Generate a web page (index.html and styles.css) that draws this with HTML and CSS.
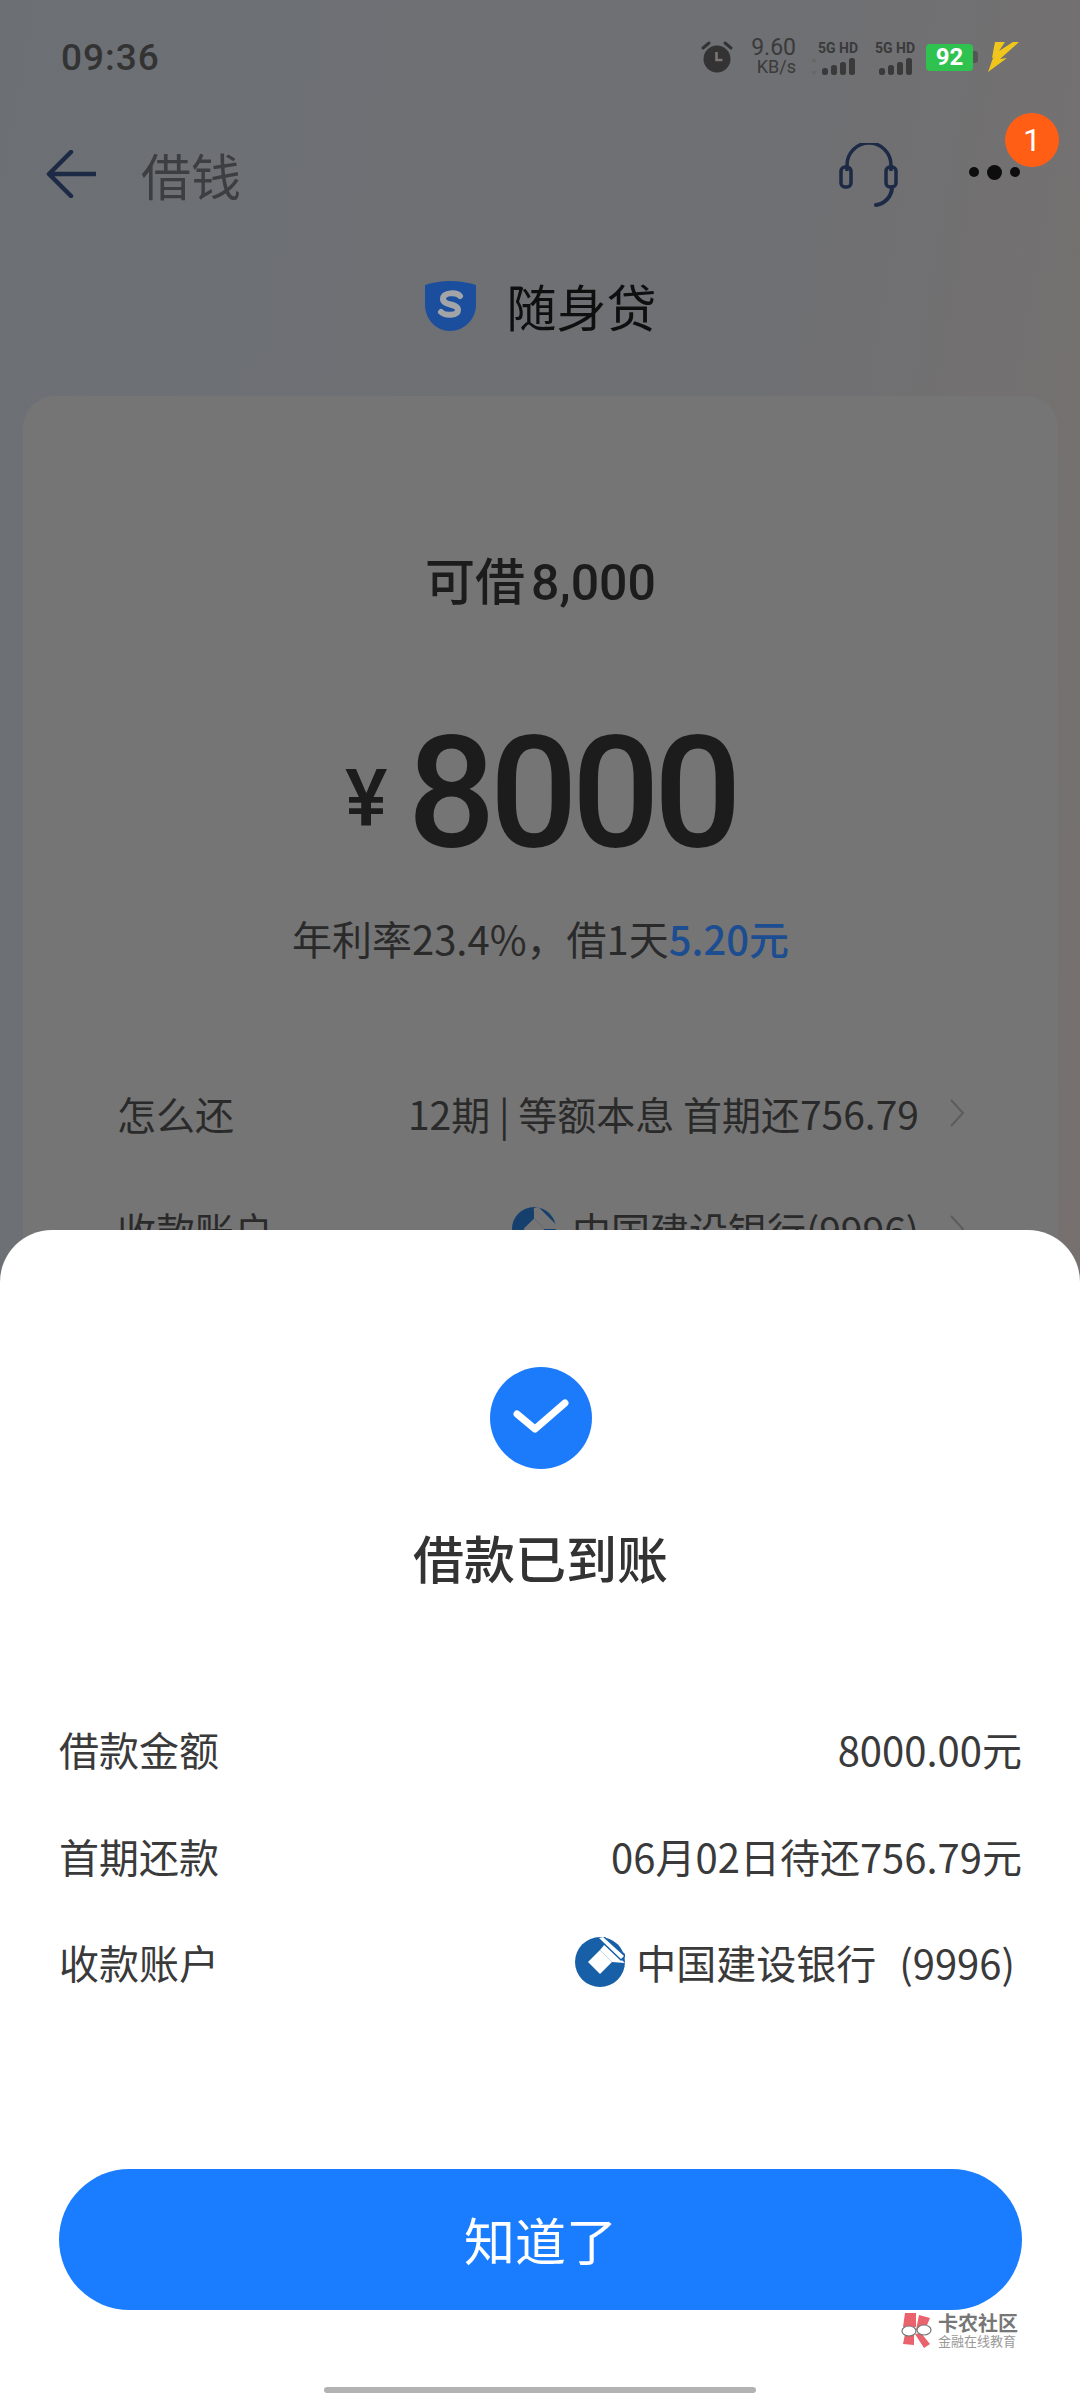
FILE: index.html
```html
<!DOCTYPE html>
<html lang="zh-CN">
<head>
<meta charset="utf-8">
<title>借钱</title>
<link rel="stylesheet" href="styles.css">
</head>
<body>
<div class="page">
  <header class="status">
    <span class="time">09:36</span>
    <div class="status-icons">
      <svg class="alarm" width="34" height="34" viewBox="0 0 34 34"><circle cx="17" cy="19" r="13.5" fill="#333"/><path d="M16.5 12v8h6" fill="none" stroke="#7a7572" stroke-width="2.6"/><path d="M3 8l6-5M31 8l-6-5" stroke="#333" stroke-width="3" stroke-linecap="round"/></svg>
      <div class="speed"><span class="speed-num">9.60</span><span class="speed-unit">KB/s</span></div>
      <div class="sim">
        <span class="sim-label">5G HD</span>
        <svg width="48" height="17" viewBox="0 0 48 17"><path d="M4 0l3 4H1zM4 17l3-4H1z" fill="#6a6664"/><rect x="12" y="10" width="6" height="7" rx="2.5" fill="#3a3a3a"/><rect x="21" y="7" width="6" height="10" rx="2.5" fill="#3a3a3a"/><rect x="30" y="4" width="6" height="13" rx="2.5" fill="#3a3a3a"/><rect x="39" y="0" width="6" height="17" rx="2.5" fill="#3a3a3a"/></svg>
      </div>
      <div class="sim">
        <span class="sim-label">5G HD</span>
        <svg width="48" height="17" viewBox="0 0 48 17"><rect x="12" y="10" width="6" height="7" rx="2.5" fill="#3a3a3a"/><rect x="21" y="7" width="6" height="10" rx="2.5" fill="#3a3a3a"/><rect x="30" y="4" width="6" height="13" rx="2.5" fill="#3a3a3a"/><rect x="39" y="0" width="6" height="17" rx="2.5" fill="#3a3a3a"/></svg>
      </div>
      <div class="battery"><span class="battery-body">92</span><span class="battery-nub"></span></div>
      <svg class="bolt" width="32" height="30" viewBox="0 0 32 30"><path d="M7 0h10L11 9 25 0h6L12 17l7-1L0 30l5-14 2-1-3 1z" fill="#f0c61c"/></svg>
    </div>
  </header>

  <nav class="nav">
    <svg class="back" width="50" height="48" viewBox="0 0 50 48"><path d="M25 2L3 24l22 22M4 24h45" fill="none" stroke="#1c2a45" stroke-width="4.5" stroke-linecap="round" stroke-linejoin="round"/></svg>
    <h1 class="nav-title">借钱</h1>
    <svg class="headset" width="60" height="64" viewBox="0 0 60 64"><path d="M8 28v-6a21 21 0 0 1 44 0v6" fill="none" stroke="#1c2a45" stroke-width="3.5"/><rect x="2" y="24" width="10" height="20" rx="4" fill="none" stroke="#1c2a45" stroke-width="3.5"/><rect x="47" y="24" width="10" height="20" rx="4" fill="none" stroke="#1c2a45" stroke-width="3.5"/><path d="M53 44c0 10-8 17-16 18" fill="none" stroke="#1c2a45" stroke-width="4" stroke-linecap="round"/></svg>
    <div class="more"><span class="dot"></span><span class="dot dot-big"></span><span class="dot"></span></div>
    <span class="badge">1</span>
  </nav>

  <div class="brand">
    <svg width="53" height="52" viewBox="0 0 53 52"><path d="M1 6Q26-2 52 6v20c0 14-12 26-26 26S1 40 1 26z" fill="#1b4f9e"/><path d="M36 17c-3-4-17-4-17 3 0 7 15 4 15 11 0 6-13 6-17 2" fill="none" stroke="#a2a4a8" stroke-width="6" stroke-linecap="round"/></svg>
    <span class="brand-name">随身贷</span>
  </div>

  <section class="card">
    <div class="limit">可借<span class="limit-num">8,000</span></div>
    <div class="amount"><span class="yen">¥</span><span class="amount-num">8000</span></div>
    <div class="rate">年利率23.4%，借1天<span class="rate-hl">5.20元</span></div>
    <div class="card-row">
      <span>怎么还</span>
      <span class="card-val">12期 | 等额本息 首期还756.79<svg class="chev" width="16" height="30" viewBox="0 0 16 30"><path d="M2 2l12 13L2 28" fill="none" stroke="#5c5c5c" stroke-width="2"/></svg></span>
    </div>
    <div class="card-row">
      <span>收款账户</span>
      <span class="card-val"><svg class="ccb ccb-dim" width="44" height="44" viewBox="0 0 50 50"><circle cx="25" cy="25" r="25" fill="#15406e"/><path d="M25 13l12 12-12 12-12-12z" fill="#757575"/><path d="M25 1l5-1 20 20v5H37L25 13zM24 3l3-1 18 17-3 3z" fill="#757575"/></svg>中国建设银行(9996)<svg class="chev" width="16" height="30" viewBox="0 0 16 30"><path d="M2 2l12 13L2 28" fill="none" stroke="#5c5c5c" stroke-width="2"/></svg></span>
    </div>
  </section>

  <section class="sheet">
    <div class="check">
      <svg width="56" height="40" viewBox="0 0 56 40"><path d="M4 16l18 15L52 5" fill="none" stroke="#fff" stroke-width="7" stroke-linecap="round" stroke-linejoin="round"/></svg>
    </div>
    <h2 class="sheet-title">借款已到账</h2>
    <div class="rows">
      <div class="row"><span>借款金额</span><span>8000.00元</span></div>
      <div class="row"><span>首期还款</span><span>06月02日待还756.79元</span></div>
      <div class="row"><span>收款账户</span>
        <span class="account">
          <svg class="ccb" width="50" height="50" viewBox="0 0 50 50"><circle cx="25" cy="25" r="25" fill="#1760a8"/><path d="M25 13l12 12-12 12-12-12z" fill="#fff"/><path d="M25 13l5-6 20 19-13-1z" fill="#fff"/><path d="M26 0h4l20 17v3l-4 4L25 4z" fill="#1760a8"/><path d="M24 1l4-1 21 19-3 3z" fill="#fff"/></svg>
          <span>中国建设银行</span><span class="account-no">(9996)</span>
        </span>
      </div>
    </div>
    <button class="cta">知道了</button>
    <div class="watermark">
      <svg width="34" height="36" viewBox="0 0 34 36"><path d="M5 1h11v14H3zM19 3l11 3-5 12H16zM5 22h9v11L3 32zM15 22l6-1 9 11-6 4z" fill="#e9626c"/><ellipse cx="9" cy="19" rx="7" ry="5" fill="#fff" stroke="#777" stroke-width="1.2"/><ellipse cx="24" cy="18" rx="7" ry="5" fill="#fff" stroke="#777" stroke-width="1.2"/></svg>
      <div class="wm-text"><span class="wm-main">卡农社区</span><span class="wm-sub">金融在线教育</span></div>
    </div>
    <div class="home-bar"></div>
  </section>
</div>
</body>
</html>
```

FILE: styles.css
```css
* { box-sizing: border-box; }
html, body { margin: 0; padding: 0; }
body { font-family: "Noto Sans CJK SC", "Noto Sans", sans-serif; }
.page {
  position: relative;
  width: 1080px;
  height: 2400px;
  overflow: hidden;
  background: linear-gradient(100deg, #6c7075 0%, #6f7073 55%, #79716d 100%);
}
.status {
  height: 114px;
  padding: 0 60px 0 61px;
  display: flex;
  align-items: center;
  justify-content: space-between;
}
.time { font: 500 37px/1 "Roboto", sans-serif; color: #333; letter-spacing: 1px; }
.status-icons { display: flex; align-items: center; height: 40px; }
.alarm { margin-right: 16px; }
.speed { display: flex; flex-direction: column; align-items: flex-end; width: 46px; margin-right: 14px; color: #3a3a3a; font-family: "Roboto", sans-serif; }
.speed-num { font-size: 23px; line-height: 20px; }
.speed-unit { font-size: 18px; line-height: 18px; }
.sim { display: flex; flex-direction: column; align-items: flex-end; width: 48px; margin-right: 9px; }
.sim-label { font: 700 14px/16px "Roboto", sans-serif; color: #3a3a3a; white-space: nowrap; }
.sim svg { margin-top: 2px; }
.battery { display: flex; align-items: center; margin-left: 2px; margin-right: 10px; }
.battery-body { width: 47px; height: 27px; border-radius: 4px; background: #2fc24f; color: #fff; font: 700 24px/27px "Roboto", sans-serif; text-align: center; }
.battery-nub { width: 5px; height: 12px; background: #555; border-radius: 0 3px 3px 0; }
.bolt { display: block; }

.nav { position: relative; height: 120px; display: flex; align-items: center; padding: 0 55px 0 46px; }
.nav-title { margin: 0 0 0 45px; font-size: 50px; font-weight: 400; line-height: 1; color: #3d3e41; flex: 1; }
.headset { margin-right: 70px; margin-top: 2px; }
.more { display: flex; align-items: center; gap: 8px; width: 56px; margin-top: -4px; }
.dot { width: 10px; height: 10px; border-radius: 50%; background: #0d0d0d; }
.dot-big { width: 15px; height: 15px; }
.badge {
  position: absolute;
  left: 1005px;
  top: -1px;
  width: 54px;
  height: 54px;
  border-radius: 50%;
  background: #ff5e14;
  color: #fff;
  font: 400 32px/54px "Roboto", sans-serif;
  text-align: center;
}

.brand { height: 90px; margin-top: 26px; display: flex; align-items: center; justify-content: center; gap: 30px; }
.brand-name { font-size: 50px; line-height: 1; color: #0f0f0f; }

.card {
  margin: 46px 22px 0 23px;
  height: 1000px;
  padding-top: 147px;
  border-radius: 32px;
  background: #757575;
  color: #1c1c1c;
}
.limit { height: 70px; line-height: 70px; font-size: 50px; font-weight: 500; text-align: center; }
.limit-num { font-family: "Roboto", sans-serif; margin-left: 6px; }
.amount { margin-top: 100px; height: 160px; display: flex; align-items: flex-end; justify-content: center; gap: 20px; }
.yen { font: 500 80px/120px "Roboto", sans-serif; padding-bottom: 14px; }
.amount-num { font: 500 155px/160px "Roboto", sans-serif; letter-spacing: -6px; }
.rate { margin-top: 35px; height: 60px; line-height: 60px; font-size: 40px; color: #2a2a2a; text-align: center; }
.rate-hl { color: #1c4d91; font-weight: 500; }
.card-row { height: 116px; padding: 0 93px 0 94px; display: flex; align-items: center; justify-content: space-between; font-size: 39px; color: #2a2a2a; }
.rate + .card-row { margin-top: 87px; }
.card-val { display: flex; align-items: center; }
.chev { margin-left: 30px; }
.ccb { display: block; }
.ccb-dim { margin-right: 16px; }

.sheet {
  position: absolute;
  left: 0;
  top: 1230px;
  width: 1080px;
  height: 1170px;
  padding: 137px 58px 0 59px;
  background: #fff;
  border-radius: 52px 52px 0 0;
  display: flex;
  flex-direction: column;
  align-items: stretch;
}
.check { align-self: center; width: 102px; height: 102px; border-radius: 50%; background: #1c7bfb; display: flex; align-items: center; justify-content: center; }
.sheet-title { margin: 53px 0 0; height: 70px; line-height: 70px; font-size: 51px; font-weight: 500; color: #333; text-align: center; }
.rows { margin-top: 104px; }
.row { height: 106.5px; display: flex; align-items: center; justify-content: space-between; font-size: 40px; color: #3a3a3a; }
.account { display: flex; align-items: center; gap: 11px; padding-right: 7px; }
.account-no { margin-left: 12px; }
.cta { margin-top: 153px; height: 141px; border: 0; border-radius: 71px; background: #1a7dff; color: #fff; font-family: inherit; font-size: 51px; }
.watermark { position: absolute; left: 900px; top: 1082px; display: flex; gap: 4px; }
.wm-text { display: flex; flex-direction: column; align-items: flex-start; }
.wm-main { font-size: 20px; line-height: 22px; font-weight: 700; color: #777; white-space: nowrap; }
.wm-sub { font-size: 13px; line-height: 14px; color: #999; white-space: nowrap; }
.home-bar { position: absolute; left: 324px; top: 1157px; width: 432px; height: 6px; border-radius: 3px; background: #b3b3b3; }
```
